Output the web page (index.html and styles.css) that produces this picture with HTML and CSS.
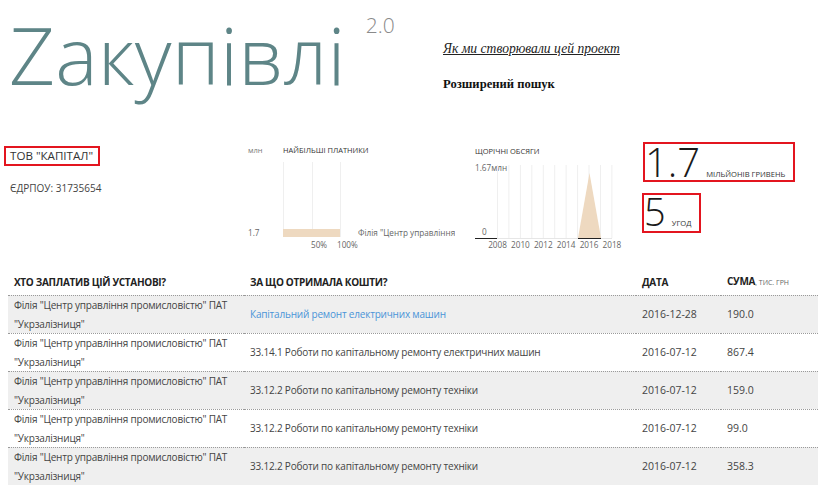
FILE: index.html
```html
<!DOCTYPE html>
<html lang="uk">
<head>
<meta charset="utf-8">
<title>Zакупівлі 2.0</title>
<link rel="stylesheet" href="styles.css">
</head>
<body>
<div class="page">
  <header class="top">
    <div class="logo">
      <span class="logo-word">Zакупівлі</span>
      <span class="ver">2.0</span>
    </div>
    <nav class="nav">
      <a class="about" href="#">Як ми створювали цей проект</a>
      <a class="search" href="#">Розширений пошук</a>
    </nav>
  </header>

  <section class="summary">
    <div class="company">
      <div class="company-name">ТОВ "КАПІТАЛ"</div>
      <div class="edrpou">ЄДРПОУ: 31735654</div>
    </div>

    <svg class="chart chart-payers" width="211" height="115" viewBox="244 140 211 115">
      <text x="248" y="153" class="c-unit">млн</text>
      <text x="283" y="153" class="c-title">НАЙБІЛЬШІ ПЛАТНИКИ</text>
      <line x1="283.5" y1="162" x2="283.5" y2="237" class="c-grid"/>
      <line x1="312.5" y1="162" x2="312.5" y2="237" class="c-grid"/>
      <line x1="340.5" y1="162" x2="340.5" y2="237" class="c-grid"/>
      <rect x="283" y="229" width="57" height="8" class="c-fill"/>
      <text x="248" y="236" class="c-label">1.7</text>
      <text x="358" y="236" class="c-label">Філія "Центр управління промисловістю" ПАТ "Укрзалізниця"</text>
      <text x="311" y="248" class="c-label">50%</text>
      <text x="337" y="248" class="c-label">100%</text>
    </svg>

    <svg class="chart chart-years" width="160" height="115" viewBox="470 140 160 115">
      <text x="475" y="154" class="c-title">ЩОРІЧНІ ОБСЯГИ</text>
      <text x="475" y="171" class="c-label">1.67млн</text>
      <line x1="497.5" y1="165" x2="497.5" y2="238" class="c-grid"/>
      <line x1="508.9" y1="165" x2="508.9" y2="238" class="c-grid"/>
      <line x1="520.4" y1="165" x2="520.4" y2="238" class="c-grid"/>
      <line x1="531.8" y1="165" x2="531.8" y2="238" class="c-grid"/>
      <line x1="543.3" y1="165" x2="543.3" y2="238" class="c-grid"/>
      <line x1="554.7" y1="165" x2="554.7" y2="238" class="c-grid"/>
      <line x1="566.1" y1="165" x2="566.1" y2="238" class="c-grid"/>
      <line x1="577.6" y1="165" x2="577.6" y2="238" class="c-grid"/>
      <line x1="589.0" y1="165" x2="589.0" y2="238" class="c-grid"/>
      <line x1="600.5" y1="165" x2="600.5" y2="238" class="c-grid"/>
      <line x1="611.9" y1="165" x2="611.9" y2="238" class="c-grid"/>
      <line x1="497" y1="238.5" x2="612" y2="238.5" class="c-base"/>
      <polygon points="578,238 589.5,173 601,238" class="c-fill"/>
      <line x1="475" y1="238.5" x2="497" y2="238.5" class="c-axis"/>
      <line x1="578" y1="238.5" x2="601" y2="238.5" class="c-axis"/>
      <text x="482" y="235" class="c-label">0</text>
      <text x="497.5" y="248" class="c-label c-mid">2008</text>
      <text x="520.4" y="248" class="c-label c-mid">2010</text>
      <text x="543.3" y="248" class="c-label c-mid">2012</text>
      <text x="566.1" y="248" class="c-label c-mid">2014</text>
      <text x="589.0" y="248" class="c-label c-mid">2016</text>
      <text x="611.9" y="248" class="c-label c-mid">2018</text>
    </svg>

    <div class="stats">
      <div class="stat stat-sum"><span class="stat-num">1.7</span><span class="stat-unit">мільйонів гривень</span></div>
      <div class="stat stat-count"><span class="stat-num">5</span><span class="stat-unit">угод</span></div>
    </div>
  </section>

  <table class="deals">
    <colgroup>
      <col class="col-payer">
      <col class="col-subject">
      <col class="col-date">
      <col class="col-sum">
    </colgroup>
    <thead>
      <tr>
        <th>Хто заплатив цій установі?</th>
        <th>За що отримала кошти?</th>
        <th>Дата</th>
        <th>Сума<span class="th-unit">, тис. грн</span></th>
      </tr>
    </thead>
    <tbody>
      <tr>
        <td class="txt">Філія "Центр управління промисловістю" ПАТ "Укрзалізниця"</td>
        <td class="txt"><a class="deal-link" href="#">Капітальний ремонт електричних машин</a></td>
        <td>2016-12-28</td>
        <td>190.0</td>
      </tr>
      <tr>
        <td class="txt">Філія "Центр управління промисловістю" ПАТ "Укрзалізниця"</td>
        <td class="txt">33.14.1 Роботи по капітальному ремонту електричних машин</td>
        <td>2016-07-12</td>
        <td>867.4</td>
      </tr>
      <tr>
        <td class="txt">Філія "Центр управління промисловістю" ПАТ "Укрзалізниця"</td>
        <td class="txt">33.12.2 Роботи по капітальному ремонту техніки</td>
        <td>2016-07-12</td>
        <td>159.0</td>
      </tr>
      <tr>
        <td class="txt">Філія "Центр управління промисловістю" ПАТ "Укрзалізниця"</td>
        <td class="txt">33.12.2 Роботи по капітальному ремонту техніки</td>
        <td>2016-07-12</td>
        <td>99.0</td>
      </tr>
      <tr>
        <td class="txt">Філія "Центр управління промисловістю" ПАТ "Укрзалізниця"</td>
        <td class="txt">33.12.2 Роботи по капітальному ремонту техніки</td>
        <td>2016-07-12</td>
        <td>358.3</td>
      </tr>
    </tbody>
  </table>
</div>
</body>
</html>
```

FILE: styles.css
```css
html, body {
  margin: 0;
  padding: 0;
  background: #ffffff;
}

body {
  font-family: "Open Sans", "Noto Sans", sans-serif;
  color: #444444;
  overflow: hidden;
}

.page {
  width: 820px;
}

/* ---------- header ---------- */
.top {
  display: flex;
  align-items: flex-start;
  padding-top: 14px;
}

.logo {
  box-sizing: border-box;
  width: 443px;
  padding-left: 9px;
  display: flex;
  align-items: flex-start;
}

.logo-word {
  font-weight: 300;
  font-size: 80px;
  line-height: 80px;
  color: #5e8587;
  letter-spacing: 0.2px;
}

.ver {
  font-weight: 300;
  font-size: 21px;
  line-height: 21px;
  color: #8a8a8a;
  margin-left: 20px;
  margin-top: 1px;
}

.nav {
  display: flex;
  flex-direction: column;
  align-items: flex-start;
  margin-top: 26px;
  font-family: "Liberation Serif", "DejaVu Serif", serif;
  color: #111111;
}

.about {
  font-style: italic;
  font-size: 13.6px;
  line-height: 18px;
  color: #222222;
  text-decoration: underline;
}

.search {
  margin-top: 17px;
  font-weight: 700;
  font-size: 12.6px;
  line-height: 18px;
  color: #111111;
  text-decoration: none;
}

/* ---------- summary ---------- */
.summary {
  display: flex;
  align-items: flex-start;
  height: 115px;
  margin-top: 46px;
}

.company {
  width: 236px;
  margin-left: 4px;
}

.company-name {
  display: inline-block;
  margin-top: 6px;
  padding: 0 5px 0 4px;
  border: 2px solid #e3151f;
  font-size: 11.6px;
  line-height: 16px;
  color: #333333;
}

.edrpou {
  margin-top: 15px;
  padding-left: 6px;
  font-size: 10px;
  line-height: 14px;
  color: #444444;
}

.chart {
  display: block;
  flex: none;
  overflow: hidden;
  font-family: "Open Sans", "Noto Sans", sans-serif;
}

.chart-payers {
  margin-left: 4px;
}

.chart-years {
  margin-left: 15px;
}

.c-title {
  font-size: 7.5px;
  fill: #333333;
}

.c-unit {
  font-size: 7.5px;
  fill: #777777;
}

.c-label {
  font-size: 8.2px;
  fill: #666666;
}

.c-mid {
  text-anchor: middle;
}

.c-grid {
  stroke: #efefef;
  stroke-width: 1;
}

.c-base {
  stroke: #e6e6e6;
  stroke-width: 1;
}

.c-axis {
  stroke: #222222;
  stroke-width: 1;
}

.c-fill {
  fill: #eed9c0;
}

.stats {
  display: flex;
  flex-direction: column;
  align-items: flex-start;
  gap: 11px;
  margin-left: 13px;
  margin-top: 2px;
}

.stat {
  display: flex;
  align-items: baseline;
  height: 36px;
  padding: 0 8px 0 0;
  border: 2px solid #e3151f;
  color: #222222;
}

.stat-num {
  font-weight: 300;
  font-size: 40px;
  line-height: 36px;
  color: #1a1a1a;
}

.stat-unit {
  margin-left: 6px;
  font-size: 7.6px;
  line-height: 10px;
  text-transform: uppercase;
  color: #333333;
}

.stat-count {
  margin-left: -1px;
  height: 32px;
  padding-bottom: 4px;
}

.stat-count .stat-num {
  font-size: 38px;
  line-height: 32px;
}

/* ---------- table ---------- */
.deals {
  width: 810px;
  margin: 13px 0 0 8px;
  border-collapse: separate;
  border-spacing: 0;
  table-layout: fixed;
}

.col-payer { width: 236px; }
.col-subject { width: 392px; }
.col-date { width: 85px; }
.col-sum { width: 97px; }

.deals th {
  padding: 5px 6px 4px;
  text-align: left;
  font-weight: 700;
  font-size: 10px;
  line-height: 16px;
  letter-spacing: -0.3px;
  text-transform: uppercase;
  color: #222222;
  white-space: nowrap;
}

.th-unit {
  font-weight: 400;
  font-size: 7px;
  letter-spacing: 0;
  color: #666666;
}

.deals td {
  padding: 0 6px;
  border-top: 1px dotted #9a9a9a;
  font-size: 10.5px;
  line-height: 18.5px;
  color: #444444;
  vertical-align: middle;
}

.deals td.txt {
  font-size: 10px;
  letter-spacing: -0.2px;
}

.deals tbody tr:nth-child(odd) td {
  background: #efefef;
}

.deal-link {
  color: #4a94d8;
  text-decoration: none;
}
```
